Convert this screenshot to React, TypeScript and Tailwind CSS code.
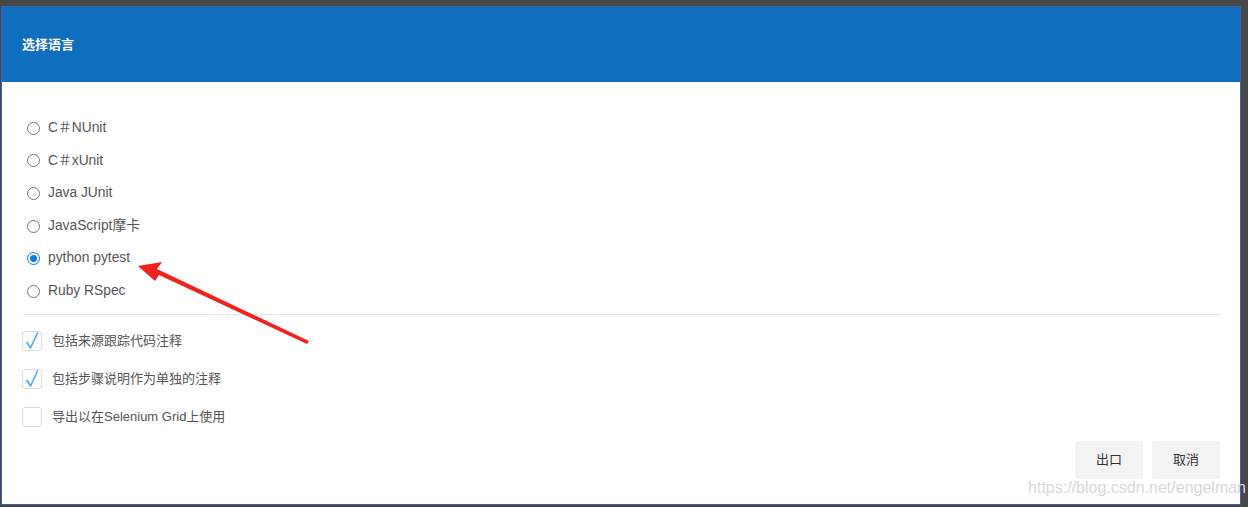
import React from "react";

const radios = ["C＃NUnit", "C＃xUnit", "Java JUnit", "JavaScript摩卡", "python pytest", "Ruby RSpec"];
const checks: [string, boolean][] = [
  ["包括来源跟踪代码注释", true],
  ["包括步骤说明作为单独的注释", true],
  ["导出以在Selenium Grid上使用", false],
];

export default function App() {
  return (
    <div
      className="relative w-[1248px] h-[507px] bg-[#474747] overflow-hidden pt-[6px] pl-[1px]"
      style={{ fontFamily: '"Liberation Sans", Arial, "Noto Sans CJK SC", sans-serif' }}
    >
      <div className="w-[1240px] h-[499px] bg-white border border-[#3a62b0] flex flex-col relative">
        <div className="h-[75px] bg-[#106ebe] flex items-center pl-[20px] shrink-0">
          <span className="text-white text-[13px] font-bold">选择语言</span>
        </div>
        <div className="flex flex-col pt-[30px] pl-[25px]">
          {radios.map((r, i) => (
            <div key={r} className="flex items-center h-[32.6px]">
              {i === 4 ? (
                <span className="w-[13px] h-[13px] rounded-full border border-[#0b79e6] flex items-center justify-center">
                  <span className="w-[7px] h-[7px] rounded-full bg-[#0b79e6]" />
                </span>
              ) : (
                <span className="w-[13px] h-[13px] rounded-full border border-[#767676]" />
              )}
              <span className="ml-[8px] text-[13.8px] text-[#555]">{r}</span>
            </div>
          ))}
        </div>
        <div className="ml-[21px] mr-[19px] mt-[6px] h-px bg-[#e6e6e6]" />
        <div className="flex flex-col pl-[20px] pt-[16px] gap-[18px]">
          {checks.map(([t, c]) => (
            <div key={t} className="flex items-center h-[20px]">
              <span className="w-[20px] h-[20px] rounded-[3px] border border-[#dcdcdc] flex items-center justify-center">
                {c && (
                  <svg width="14" height="18" viewBox="0 0 14 18">
                    <path d="M2 10.5 L5.5 16 L12.5 1" fill="none" stroke="#4aa6f7" strokeWidth="1.6" strokeLinecap="round" strokeLinejoin="round" />
                  </svg>
                )}
              </span>
              <span className="ml-[10px] text-[13px] text-[#555]">{t}</span>
            </div>
          ))}
        </div>
        <div className="flex justify-end gap-[9px] pr-[20px] mt-[14px]">
          <button className="w-[68px] h-[38px] rounded-[3px] bg-[#f3f3f3] text-[13px] text-[#333]">出口</button>
          <button className="w-[68px] h-[38px] rounded-[3px] bg-[#f3f3f3] text-[13px] text-[#333]">取消</button>
        </div>
        <div className="absolute right-[-6px] bottom-[4px] text-[16px] text-[#d8d8d8] whitespace-nowrap">
          https://blog.csdn.net/engelman
        </div>
      </div>
      <svg className="absolute left-0 top-0 pointer-events-none" width="1248" height="507">
        <path d="M307 344 L159 275 L155 281 L138 266 L162 262 L157 269 L309 341 Z" fill="#f0231c" />
      </svg>
    </div>
  );
}
